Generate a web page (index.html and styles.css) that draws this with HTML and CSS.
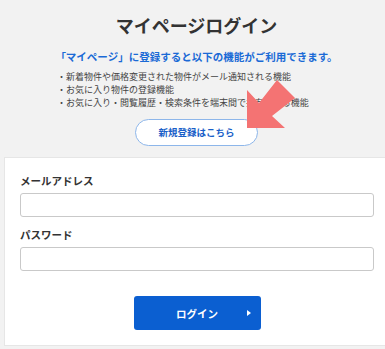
FILE: index.html
```html
<!DOCTYPE html>
<html>
<head>
<meta name="viewport" content="width=device-width, initial-scale=1">
<link rel="stylesheet" href="styles.css">
</head>
<body>

<div class="page">
  <div class="intro">
    <h1 class="title">マイページログイン</h1>
    <p class="lead">「マイページ」に登録すると以下の機能がご利用できます。</p>
    <ul class="features">
      <li>・新着物件や価格変更された物件がメール通知される機能</li>
      <li>・お気に入り物件の登録機能</li>
      <li>・お気に入り・閲覧履歴・検索条件を端末間で共有できる機能</li>
    </ul>
    <a class="registerBtn" href="#">新規登録はこちら</a>

    <!-- pointer arrow drawn over the list -->
    <svg class="pointer" width="60" height="60" viewBox="0 0 60 60">
      <polygon points="7,15 7,53 45,53 32,41 55,23 37,5 19,28" fill="#f47373"/>
    </svg>
  </div>

  <form class="card">
    <label class="fieldLabel" for="mail">メールアドレス</label>
    <input class="field" type="text" id="mail">

    <label class="fieldLabel pass" for="pass">パスワード</label>
    <input class="field" type="password" id="pass">

    <div class="actions">
      <button type="button" class="loginBtn">ログイン<span class="tri"></span></button>
    </div>
  </form>
</div>

</body>
</html>
```

FILE: styles.css
```css
* {
  box-sizing: border-box;
}

body {
  margin: 0;
  background: #f2f2f2;
  overflow: hidden;
  font-family: "Noto Sans CJK JP", "Noto Sans", sans-serif;
  color: #333;
}

/* the page is a little wider than the window, shifted right */
.page {
  margin-left: 4px;
  width: 385px;
}

/* Header part */
.intro {
  position: relative;
  padding-top: 13px;
  text-align: center;
}

.title {
  margin: 0;
  font-size: 18px;
  line-height: 24px;
  font-weight: bold;
  color: #333;
}

.lead {
  margin: 13px 0 0;
  font-size: 10.5px;
  line-height: 14px;
  font-weight: bold;
  color: #1a6ad6;
}

.features {
  margin: 6px 0 0 53px;
  padding: 0;
  list-style: none;
  text-align: left;
  font-size: 9px;
  line-height: 13px;
  color: #444;
}

.registerBtn {
  display: inline-block;
  margin-top: 10px;
  width: 123px;
  height: 27px;
  line-height: 25px;
  border: 1px solid #8db6ea;
  border-radius: 14px;
  background: #fff;
  color: #1a5fc8;
  font-size: 9.5px;
  font-weight: bold;
  text-decoration: none;
}

.pointer {
  position: absolute;
  left: 236px;
  top: 75px;
}

/* Login card */
.card {
  margin: 11px 0 0;
  padding: 16px 15px 15px;
  background: #fff;
  border: 1px solid #e6e6e6;
  border-right: 0;
}

.fieldLabel {
  display: block;
  font-size: 10.5px;
  line-height: 14px;
  font-weight: bold;
  color: #333;
}

.fieldLabel.pass {
  margin-top: 11px;
}

.field {
  display: block;
  margin-top: 5px;
  width: 100%;
  height: 24px;
  border: 1px solid #c9c9c9;
  border-radius: 3px;
  background: #fff;
}

.actions {
  margin-top: 25px;
  text-align: center;
}

.loginBtn {
  position: relative;
  width: 127px;
  height: 34px;
  border: 0;
  border-radius: 3px;
  background: #0b5fd1;
  color: #fff;
  font-family: inherit;
  font-size: 10.5px;
  font-weight: bold;
  cursor: pointer;
}

.tri {
  position: absolute;
  right: 10px;
  top: 14px;
  border-style: solid;
  border-width: 3px 0 3px 4px;
  border-color: transparent transparent transparent #fff;
}
```
